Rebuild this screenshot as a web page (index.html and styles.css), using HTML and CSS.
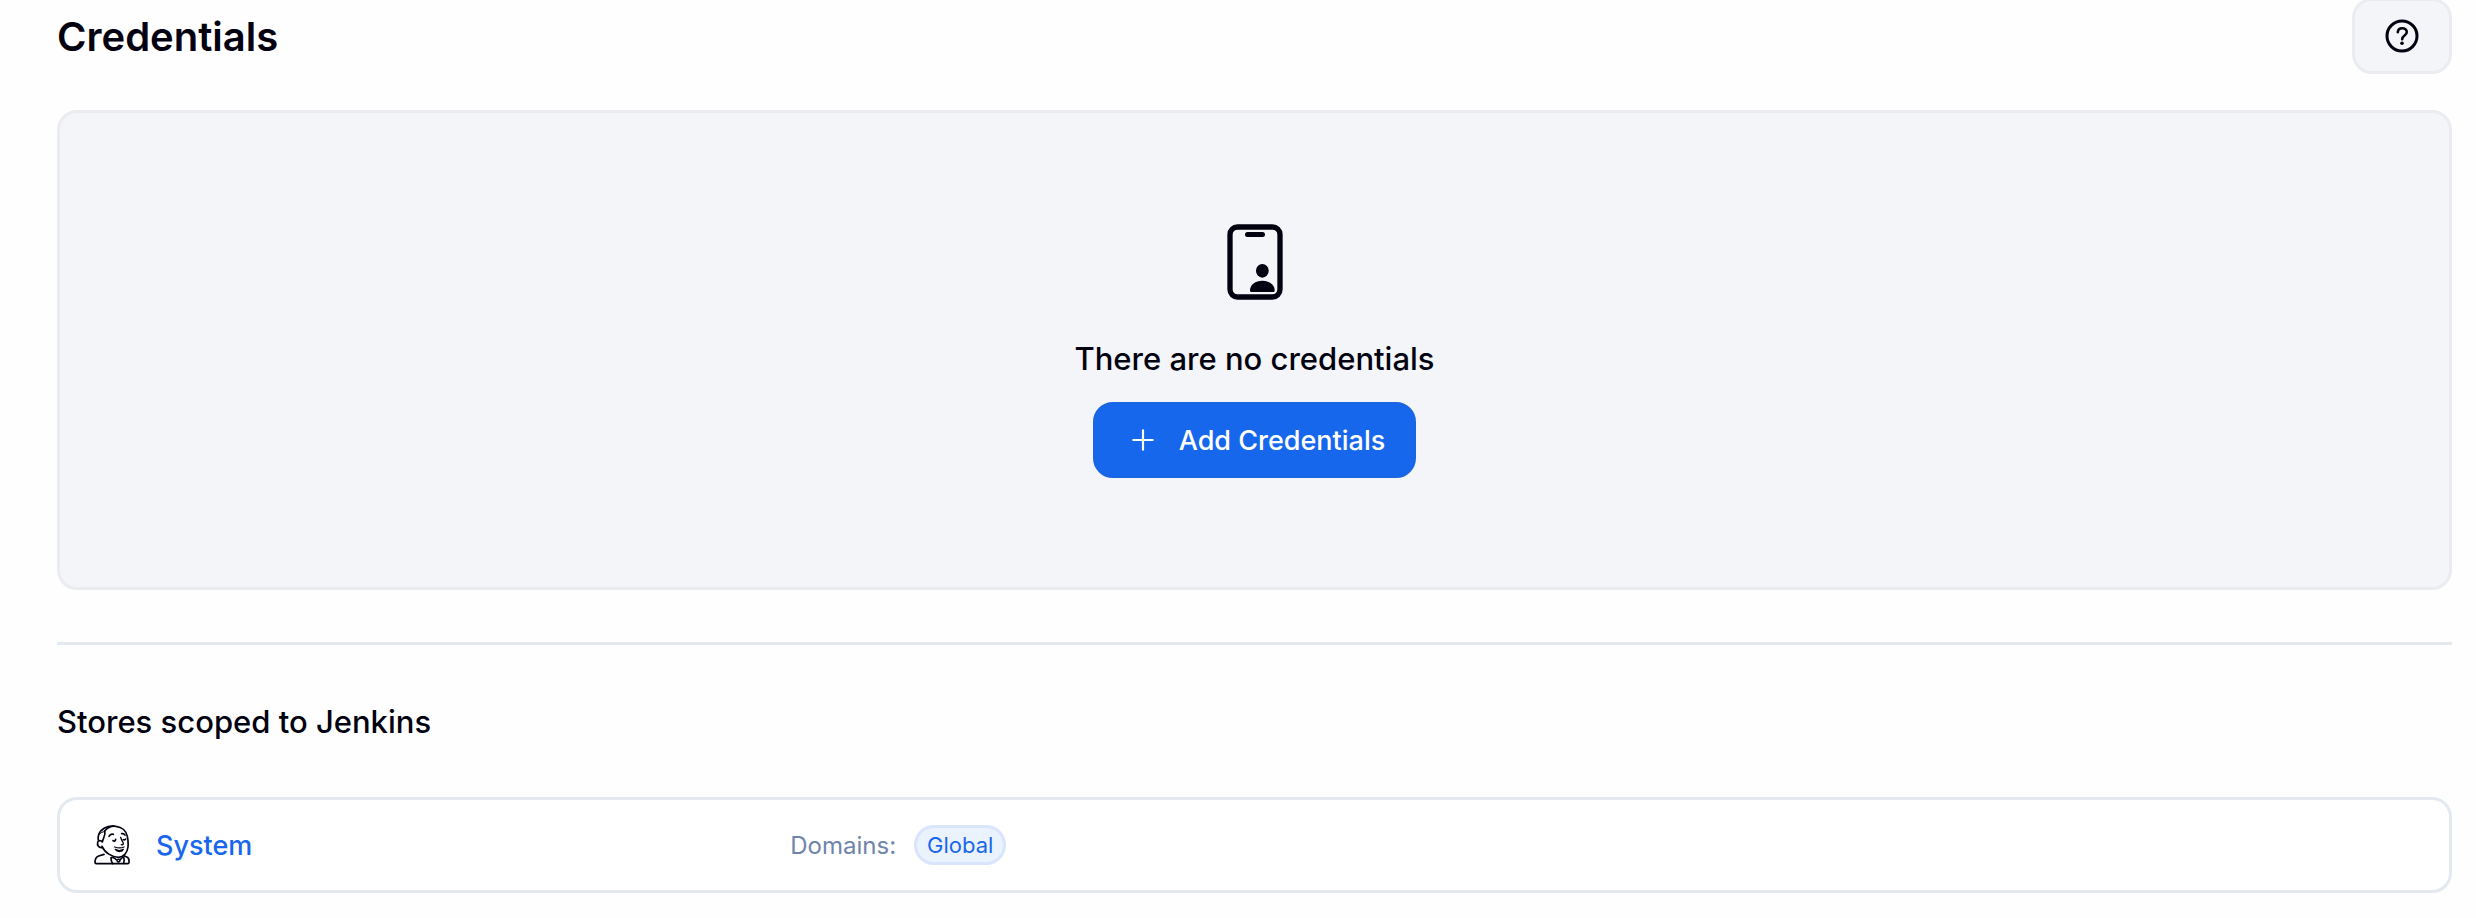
FILE: index.html
```
<!DOCTYPE html>
<html lang="en">
<head>
    <meta charset="UTF-8">
    <meta name="viewport" content="width=device-width, initial-scale=1.0">
    <title>Credentials</title>
    <link rel="stylesheet" href="styles.css">
</head>
<body>
    <main class="page">
        <header class="app-bar">
            <h1>Credentials</h1>
            <button type="button" class="button help-button" aria-label="Help">
                <svg class="help-icon" viewBox="0 0 34 34" fill="none" stroke="currentColor" stroke-linecap="round" stroke-linejoin="round">
                    <circle cx="17" cy="17" r="15" stroke-width="3"/>
                    <path d="M12.8 13.2c.2-2.7 2-4 4.4-4 2.600 0 4.600 1.500 4.600 3.900 0 3.500-4.600 3.400-4.600 7.100" stroke-width="2.600"/>
                    <circle cx="17" cy="24.300" r="1.800" fill="currentColor" stroke="none"/>
                </svg>
            </button>
        </header>

        <section class="notice">
            <svg class="notice-icon" viewBox="0 0 512 512" fill="none" stroke="currentColor" stroke-width="32" stroke-linecap="round" stroke-linejoin="round">
                <rect x="96" y="32" width="320" height="448" rx="48" stroke-width="34"/>
                <path d="M208 80h96"/>
                <ellipse cx="303" cy="312" rx="41" ry="44" fill="currentColor" stroke="none"/>
                <path d="M303 376c-44 0-79 26-79 60 0 8 4 12 11 12h136c7 0 11-4 11-12 0-34-35-60-79-60z" fill="currentColor" stroke="none"/>
            </svg>
            <p class="notice-text">There are no credentials</p>
            <button type="button" class="button primary-button">
                <svg class="plus-icon" viewBox="0 0 24 24" fill="none" stroke="currentColor" stroke-width="2" stroke-linecap="round">
                    <path d="M12 3v18M3 12h18"/>
                </svg>
                Add Credentials
            </button>
        </section>

        <hr class="divider">

        <h2>Stores scoped to Jenkins</h2>

        <div class="store">
            <div class="store-name">
                <svg class="store-icon" viewBox="0 0 108 120" fill="none" stroke="currentColor" stroke-width="5" stroke-linecap="round" stroke-linejoin="round">
                    <!-- head -->
                    <path d="M32 18C42 6 53 2 66 4c18 2 31 14 34 30 2 9 3 21 2 32-2 18-14 31-28 31-20-1-42-14-50-33"/>
                    <!-- hair and ear -->
                    <path d="M58 3C38 2 19 13 14 29c-2 7-2 12-1 16"/>
                    <path d="M32 18c3 9 0 15-3 21-2 5-3 8-4 12-4-6-12-5-14 1-2 8 3 16 11 16"/>
                    <path d="M16 28c4-5 10-8 15-8" stroke-width="3"/>
                    <!-- face -->
                    <path d="M45 34c3-6 8-8 13-6M83 26c4-1 8 1 10 4" stroke-width="5"/>
                    <path d="M57 47c3 3 7 2 8-4M88 44c3 2 6 0 7-2" stroke-width="5"/>
                    <path d="M80 37c2 9 8 14 8 19 0 3-3 4-6 3" stroke-width="4"/>
                    <path d="M62 66c8 3 19 4 28 0M64 73c8 5 16 5 24 0-3 8-18 9-24 0z" stroke-width="4"/>
                    <!-- shoulders -->
                    <path d="M30 88 14 93C6 96 3 104 3 112c0 3 1 4 4 4h94c3 0 4-1 4-4 1-9-2-15-8-17l-6-2"/>
                    <!-- bow tie -->
                    <path d="M68 105c-6-6-12-9-17-7 0 7 1 12 5 18M68 105c3-3 8-3 10 0 0 5-5 8-8 4M78 105c3-5 7-8 11-9 2 6 2 13 0 19" stroke-width="5"/>
                </svg>
                <a href="#system">System</a>
            </div>
            <div class="store-domains">
                <span>Domains:</span>
                <a class="badge" href="#global">Global</a>
            </div>
        </div>
    </main>
</body>
</html>
```
FILE: styles.css
```
* {
    box-sizing: border-box;
}

body {
    margin: 0;
    background: #fefefe;
    color: #01010f;
    font-family: Inter, "Liberation Sans", sans-serif;
    font-size: 27px;
}

.page {
    padding: 0 24px 24px 57px;
}

.app-bar {
    display: flex;
    align-items: center;
    justify-content: space-between;
    margin: -2px 0 36px;
}

h1 {
    margin: 0;
    padding-top: 2px;
    font-size: 40px;
    font-weight: 600;
    line-height: 48px;
}

h2 {
    margin: 0;
    font-size: 31px;
    font-weight: 500;
    line-height: 36px;
}

a {
    color: #1767ed;
    text-decoration: none;
}

.button {
    display: flex;
    align-items: center;
    justify-content: center;
    height: 76px;
    border-radius: 20px;
    font-family: inherit;
    font-size: 27px;
    font-weight: 500;
    cursor: pointer;
}

.help-button {
    width: 100px;
    border: 3px solid #ebecf0;
    background: #f4f5f9;
    color: inherit;
}

.help-icon {
    width: 34px;
    height: 34px;
}

.notice {
    display: flex;
    flex-direction: column;
    align-items: center;
    padding: 109px 24px;
    border: 3px solid #ebecf0;
    border-radius: 20px;
    background: #f4f5f9;
}

.notice-icon {
    width: 80px;
    height: 80px;
}

.notice-text {
    margin: 39px 0 25px;
    font-size: 31px;
    font-weight: 500;
    line-height: 36px;
}

.primary-button {
    gap: 23px;
    padding: 0 29px 0 35px;
    border: 2px solid #1965e3;
    background: #1767ed;
    color: white;
}

.plus-icon {
    width: 26px;
    height: 26px;
}

.divider {
    height: 3px;
    margin: 52px 0 59px;
    border: none;
    background: #e4e9f0;
}

.store {
    display: grid;
    grid-template-columns: 3fr 7fr;
    align-items: center;
    height: 96px;
    margin-top: 57px;
    padding: 0 34px;
    border: 3px solid #e4e9f0;
    border-radius: 20px;
    background: white;
}

.store-name {
    display: flex;
    align-items: center;
    gap: 26px;
    font-weight: 500;
}

.store-icon {
    width: 36px;
    height: 40px;
}

.store-domains {
    display: flex;
    align-items: center;
    gap: 18px;
    color: #6f84ab;
    font-size: 24px;
}

.badge {
    padding: 0 10px;
    border: 3px solid #d9e5fc;
    border-radius: 20px;
    background: #eaf2fc;
    font-size: 22px;
    line-height: 34px;
}
```
